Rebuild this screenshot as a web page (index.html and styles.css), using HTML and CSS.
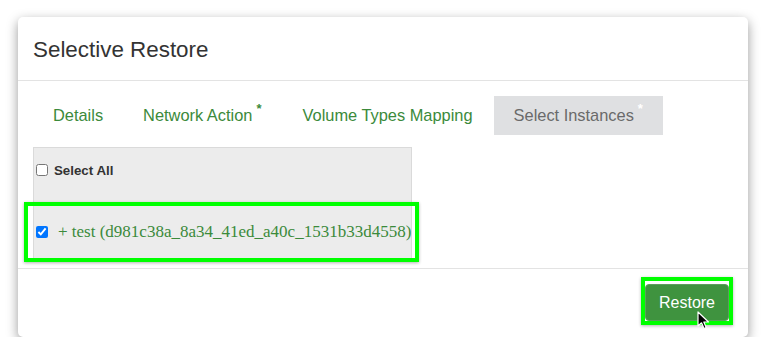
FILE: index.html
```html
<!DOCTYPE html>
<html lang="en">
<head>
    <meta charset="UTF-8">
    <title>Selective Restore</title>
    <link rel="stylesheet" href="styles.css">
</head>
<body>

<div class="modal">
    <div class="modal-header">
        <h4>Selective Restore</h4>
    </div>

    <div class="modal-body">
        <ul class="tabs">
            <li class="tab">Details</li>
            <li class="tab">Network Action<sup>*</sup></li>
            <li class="tab">Volume Types Mapping</li>
            <li class="tab active">Select Instances<sup>*</sup></li>
        </ul>

        <div class="instances">
            <label class="select-all">
                <input type="checkbox">
                <span>Select All</span>
            </label>
            <label class="instance highlight">
                <input type="checkbox" checked>
                <span>+ test (d981c38a_8a34_41ed_a40c_1531b33d4558)</span>
            </label>
        </div>
    </div>

    <div class="modal-footer">
        <div class="btn-wrap">
            <button class="btn-restore">Restore</button>
            <!-- mouse pointer -->
            <svg class="cursor" width="14" height="20" viewBox="0 0 14 20">
                <path d="M1 1 L1 15 L4.5 11.8 L7 17.5 L9.2 16.5 L6.8 11 L11.5 11 Z" fill="#000" stroke="#fff" stroke-width="1.2" stroke-linejoin="round"/>
            </svg>
        </div>
    </div>
</div>

</body>
</html>
```

FILE: styles.css
```css
body {
    margin: 0;
    padding: 17px 20px 0 18px;
    background-color: #ffffff;
    font-family: "Liberation Sans", Arial, sans-serif;
    color: #333;
}
.modal {
    width: 730px;
    height: 320px;
    background-color: #fff;
    border-radius: 5px;
    box-shadow: 0 4px 12px rgba(0, 0, 0, 0.4);
    display: flex;
    flex-direction: column;
}
.modal-header {
    height: 63px;
    padding: 0 15px;
    display: flex;
    align-items: center;
    border-bottom: 1px solid #e3e3e3;
}
.modal-header h4 {
    margin: 2px 0 0;
    font-size: 22.4px;
    font-weight: 400;
    color: #333;
}
.modal-body {
    flex: 1;
    padding: 15px 15px 0;
}
.tabs {
    list-style: none;
    margin: 0 0 12px;
    padding: 0;
    display: flex;
    height: 39px;
}
.tab {
    padding: 0 20px;
    margin-right: 1px;
    height: 39px;
    line-height: 39px;
    font-size: 16.4px;
    color: #3b8a3b;
    white-space: nowrap;
}
.tab:first-child {
    margin-right: 0;
}
.tab sup {
    font-size: 13px;
    font-weight: bold;
    line-height: 0;
    margin-left: 4px;
    vertical-align: 0;
    position: relative;
    top: -8px;
}
.tab.active {
    background-color: #dfe0e2;
    color: #6a6a6a;
}
.tab.active sup {
    color: #fff;
}
.instances {
    width: 377px;
    background-color: #ececec;
    border: 1px solid #dadada;
}
.select-all {
    display: flex;
    align-items: center;
    height: 44px;
    padding-bottom: 14px;
    font-size: 13.3px;
    font-weight: bold;
    color: #333;
}
.select-all input,
.instance input {
    margin: 0 6px 0 2px;
    width: 12px;
    height: 12px;
}
.instance {
    display: flex;
    align-items: center;
    height: 52px;
    font-family: "Liberation Serif", "Times New Roman", serif;
    font-size: 17px;
    color: #3b8a3b;
    white-space: nowrap;
}
.instance span {
    margin-left: 4px;
}
.highlight {
    position: relative;
}
.highlight::after {
    content: "";
    position: absolute;
    top: -4px;
    bottom: -4px;
    left: -10px;
    right: -8px;
    border: 4px solid #00ff00;
    box-shadow: 0 1px 3px rgba(0, 0, 0, 0.3);
}
.modal-footer {
    border-top: 1px solid #e3e3e3;
    flex: 0 0 69px;
    padding: 15px 19px 0;
    box-sizing: border-box;
    display: flex;
    justify-content: flex-end;
    align-items: flex-start;
}
.btn-wrap {
    position: relative;
}
.btn-wrap::after {
    content: "";
    position: absolute;
    top: -7px;
    bottom: -4px;
    left: -4px;
    right: -4px;
    border: 4px solid #00ff00;
    box-shadow: 0 1px 3px rgba(0, 0, 0, 0.3);
    pointer-events: none;
}
.btn-restore {
    display: block;
    width: 84px;
    background-color: #3f933f;
    color: #fff;
    border: 1px solid #5c9f5c;
    border-radius: 4px;
    height: 37px;
    padding: 0;
    font-family: "Liberation Sans", Arial, sans-serif;
    font-size: 16px;
}
.cursor {
    position: absolute;
    left: 52px;
    top: 27px;
    z-index: 2;
}
```
